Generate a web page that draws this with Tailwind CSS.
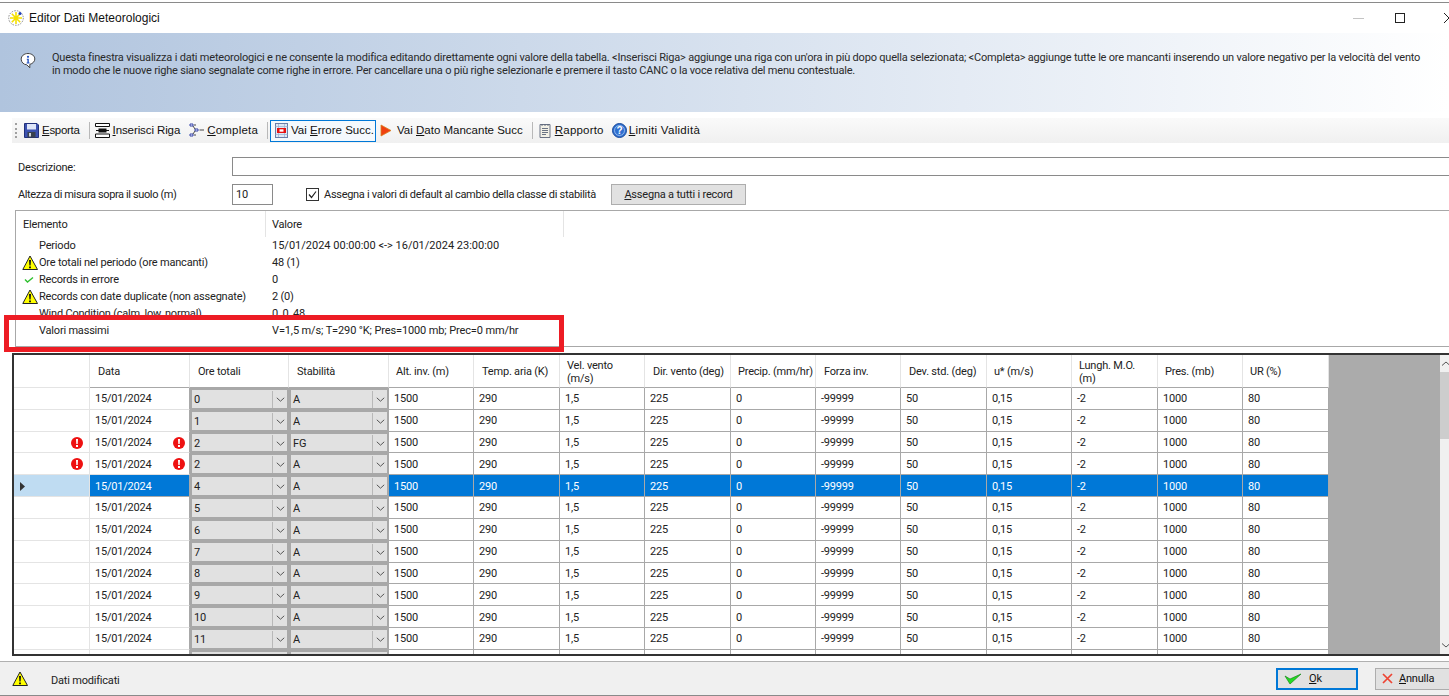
<!DOCTYPE html>
<html lang="it">
<head>
<meta charset="utf-8">
<title>Editor Dati Meteorologici</title>
<script src="https://cdn.jsdelivr.net/npm/@tailwindcss/browser@4"></script>
</head>
<body class="bg-white">
<svg class="absolute w-0 h-0" aria-hidden="true">
  <symbol id="warn" viewBox="0 0 16 16"><path d="M8 1 15.500 14.500H.8Z" fill="#ffff00" stroke="#222" stroke-width="1"/><path d="M7 5h2l-.4 5.500H7.400Z M7.100 11.500h1.800v1.800H7.100Z" fill="#111"/></symbol>
  <symbol id="err" viewBox="0 0 12 12"><circle cx="6" cy="6" r="6" fill="#ee1111"/><path d="M5 2h2l-.3 5H5.300Z M5 8h2v2H5Z" fill="#fff"/></symbol>
  <symbol id="chev" viewBox="0 0 9 5"><path d="M.8.8 4.500 4.200 8.200.8" fill="none" stroke="#555" stroke-width="1"/></symbol>
</svg>
<div class="relative w-[1449px] h-[696px] overflow-hidden flex flex-col font-['Roboto',sans-serif] text-[11px] leading-[13px] tracking-[-0.2px] text-[#222]">

  <!-- title bar -->
  <div class="h-[3px] border-b border-[#8a8a8a] shrink-0"></div>
  <div class="h-[30px] shrink-0 flex items-center pl-[8px]">
    <svg class="w-[16px] h-[16px]" viewBox="0 0 16 16"><circle cx="8" cy="8" r="7.300" fill="none" stroke="#888" stroke-width="1" stroke-dasharray="1.500 1.200"/><path d="M8 2v12M2 8h12M3.800 3.800l8.400 8.400M12.200 3.800l-8.400 8.400" stroke="#f4e000" stroke-width="1.600"/><circle cx="12" cy="3.500" r="1.500" fill="#2040c0"/></svg>
    <span class="ml-[5px] font-['Liberation_Sans',sans-serif] text-[12px] tracking-normal text-[#111]">Editor Dati Meteorologici</span>
    <div class="ml-auto flex items-center mr-[-5px]">
      <span class="w-[11px] h-px bg-[#c4c4c4] mr-[31px]"></span>
      <span class="w-[10px] h-[10px] border border-[#222] mr-[39px]"></span>
      <svg class="w-[10px] h-[10px]" viewBox="0 0 10 10"><path d="M0 0 10 10M10 0 0 10" stroke="#222" stroke-width="1"/></svg>
    </div>
  </div>

  <!-- banner -->
  <div class="h-[79px] shrink-0 bg-gradient-to-r from-[#b0c4de] to-white flex items-start pt-[18px] pl-[20px]">
    <svg class="w-[16px] h-[17px] mt-[1px] shrink-0" viewBox="0 0 16 17"><path d="M8 1.500C4 1.500 1.200 4 1.200 7.200c0 3 2.400 5.400 5.600 5.600l3 3v-3.400c3-.8 5-3 5-5.400C14.800 4 12 1.500 8 1.500Z" fill="#fff" stroke="#444" stroke-width="1"/><circle cx="8" cy="4.800" r="1.100" fill="#2050c0"/><path d="M6.800 6.800h2v3.600h.8v1H6.600v-1h.8V7.800h-.6Z" fill="#2050c0"/></svg>
    <p class="ml-[16px] whitespace-nowrap text-[#2a2a2a]">Questa finestra visualizza i dati meteorologici e ne consente la modifica editando direttamente ogni valore della tabella. &lt;Inserisci Riga&gt; aggiunge una riga con un'ora in più dopo quella selezionata; &lt;Completa&gt; aggiunge tutte le ore mancanti inserendo un valore negativo per la velocità del vento<br>in modo che le nuove righe siano segnalate come righe in errore. Per cancellare una o più righe selezionarle e premere il tasto CANC o la voce relativa del menu contestuale.</p>
  </div>

  <!-- toolbar -->
  <div class="mt-[6px] ml-[12px] h-[25px] shrink-0 bg-gradient-to-b from-[#fafafa] to-[#f0f0f0] flex items-center font-['Liberation_Sans',sans-serif] text-[11.5px] tracking-normal text-[#111] whitespace-nowrap">
    <span class="ml-[3px] w-[2px] h-[15px] border-l-2 border-dotted border-[#a0a0a0]"></span>
    <svg class="ml-[7px] w-[15px] h-[15px]" viewBox="0 0 15 15"><path d="M.5.500h12.500l1.500 1.500v12.500H.5Z" fill="#3c52b0" stroke="#22307a"/><rect x="3" y="1" width="9" height="5.500" fill="#dfe6f8"/><rect x="3.500" y="9" width="8" height="5.500" fill="#39414f"/><rect x="5" y="10" width="2" height="3.500" fill="#cfd4dc"/></svg>
    <span class="ml-[3px] tracking-[-0.3px]"><u>E</u>sporta</span>
    <span class="ml-[9px] w-px h-[17px] bg-[#b8b8b8]"></span>
    <svg class="ml-[5px] w-[15px] h-[15px]" viewBox="0 0 15 15"><path d="M.5.500h14v3H.5Z M.5 11h14v3.500H.5Z" fill="#fff" stroke="#111"/><path d="M1 7.500h13" stroke="#111" stroke-width="1"/><rect x="3.500" y="5.500" width="8" height="4" fill="#111"/></svg>
    <span class="ml-[3px] tracking-[-0.1px]"><u>I</u>nserisci Riga</span>
    <svg class="ml-[9px] w-[15px] h-[15px]" viewBox="0 0 15 15"><path d="M1 1h3v2H1Z M6 6h3v2H6Z M1 11h3v2H1Z" fill="#fff" stroke="#2030a0" stroke-width=".9"/><path d="M5 2h2M10.500 7H15M5 12h2M4 3l2 3M4 11l2-3" stroke="#333" stroke-width=".9"/></svg>
    <span class="ml-[3px] tracking-[0.2px]"><u>C</u>ompleta</span>
    <span class="ml-[9px] w-px h-[17px] bg-[#b8b8b8]"></span>
    <div class="ml-[2px] w-[106px] h-[22px] shrink-0 border border-[#0078d7] bg-[#f4f9fd] flex items-center pl-[4px]">
      <svg class="w-[13px] h-[15px] shrink-0" viewBox="0 0 13 15"><rect x=".5" y=".5" width="12" height="14" fill="#dfe8f6" stroke="#6a7ea8"/><path d="M.5 3.500h12M.5 11.500h12M3.500 1v13M9.500 1v13" stroke="#9ab0d0" stroke-width=".7"/><rect x="2" y="5" width="9" height="5" fill="#e81010"/><rect x="4.500" y="6.300" width="4" height="2.400" fill="#fff"/></svg>
      <span class="ml-[3px]">Vai <u>E</u>rrore Succ.</span>
    </div>
    <svg class="ml-[4px] w-[12px] h-[13px]" viewBox="0 0 12 13"><path d="M1 1 11 6.500 1 12Z" fill="#f04010" stroke="#d88020" stroke-width=".8"/></svg>
    <span class="ml-[5px]">Vai <u>D</u>ato Mancante Succ</span>
    <span class="ml-[9px] w-px h-[17px] bg-[#b8b8b8]"></span>
    <svg class="ml-[5px] w-[14px] h-[15px]" viewBox="0 0 14 15"><path d="M2 1.500h10v13H2Z" fill="#f2f0e6" stroke="#6a7284"/><path d="M4 1v2M7 1v2M10 1v2M4 5.500h6M4 7.500h6M4 9.500h6M4 11.500h4" stroke="#5a6478" stroke-width=".9"/></svg>
    <span class="ml-[3px] tracking-[0.2px]"><u>R</u>apporto</span>
    <svg class="ml-[8px] w-[15px] h-[15px]" viewBox="0 0 15 15"><circle cx="7.500" cy="7.500" r="7" fill="#2f6fd0" stroke="#1a4a9a"/><circle cx="7.500" cy="7.500" r="5" fill="none" stroke="#a8c8f0" stroke-width=".8"/><text x="7.500" y="11" text-anchor="middle" font-size="10" font-weight="700" fill="#fff" font-family="Liberation Sans">?</text></svg>
    <span class="ml-[2px] tracking-[0.3px]"><u>L</u>imiti Validità</span>
  </div>

  <!-- description -->
  <div class="mt-[14px] h-[19px] shrink-0 flex">
    <span class="ml-[18px] w-[214px] pt-[4px]">Descrizione:</span>
    <div class="flex-1 border-t border-l border-b border-[#8a8a8a] bg-white"></div>
  </div>

  <!-- altezza -->
  <div class="mt-[8px] h-[21px] shrink-0 flex items-center">
    <span class="ml-[18px] w-[214px] tracking-[-0.38px]">Altezza di misura sopra il suolo (m)</span>
    <div class="w-[41px] h-[21px] border border-[#8a8a8a] pl-[3px] flex items-center">10</div>
    <span class="ml-[33px] w-[13px] h-[13px] border border-[#333] flex items-center justify-center">
      <svg class="w-[9px] h-[9px]" viewBox="0 0 9 9"><path d="M1 4.500 3.500 7.500 8 1.500" fill="none" stroke="#222" stroke-width="1.200"/></svg>
    </span>
    <span class="ml-[5px] tracking-[-0.29px]">Assegna i valori di default al cambio della classe di stabilità</span>
    <button class="ml-[15px] w-[135px] h-[21px] border border-[#adadad] bg-[#e1e1e1] text-[#222]"><u>A</u>ssegna a tutti i record</button>
  </div>

  <!-- info list -->
  <div class="mt-[5px] ml-[15px] h-[137px] shrink-0 border-t border-l border-b border-[#a8a8a8] bg-white overflow-hidden">
    <div class="h-[26px] flex items-center">
      <span class="w-[250px] pl-[7px] h-full flex items-center border-r border-[#e4e4e4]">Elemento</span>
      <span class="w-[298px] pl-[6px] h-full flex items-center border-r border-[#e4e4e4]">Valore</span>
    </div>
    <div class="[&>div]:h-[17px] [&>div]:flex [&>div]:items-center">
      <div><span class="w-[256px] pl-[23px]">Periodo</span><span class="tracking-normal">15/01/2024 00:00:00 &lt;-&gt; 16/01/2024 23:00:00</span></div>
      <div><span class="w-[256px] flex items-center pl-[6px]"><svg class="w-[16px] h-[16px] mr-[1px]"><use href="#warn"/></svg>Ore totali nel periodo (ore mancanti)</span><span>48 (1)</span></div>
      <div><span class="w-[256px] flex items-center pl-[8px]"><svg class="w-[10px] h-[8px] mr-[5px]" viewBox="0 0 10 8"><path d="M1 3.500 3.500 6 9 1.500" fill="none" stroke="#30c030" stroke-width="1.400"/></svg>Records in errore</span><span>0</span></div>
      <div><span class="w-[256px] flex items-center pl-[6px]"><svg class="w-[16px] h-[16px] mr-[1px]"><use href="#warn"/></svg>Records con date duplicate (non assegnate)</span><span>2 (0)</span></div>
      <div><span class="w-[256px] pl-[23px]">Wind Condition (calm, low, normal)</span><span>0, 0, 48</span></div>
      <div><span class="w-[256px] pl-[23px]">Valori massimi</span><span class="tracking-[-0.12px]">V=1,5 m/s; T=290 °K; Pres=1000 mb; Prec=0 mm/hr</span></div>
    </div>
  </div>

  <!-- data grid -->
  <div class="mt-[6px] ml-[12px] h-[303px] shrink-0 border-t-2 border-b-2 border-l-2 border-[#333] flex overflow-hidden">
    <div class="w-[1315px] shrink-0 grid grid-cols-[76px_100px_99px_100px_85px_86px_85px_86px_85px_85px_86px_85px_86px_85px_86px] grid-rows-[33px] auto-rows-[21.82px] [&>div]:flex [&>div]:items-center [&>div]:pl-[5px] [&>div]:pt-[1px] [&>div]:border-r [&>div]:border-b [&>div]:border-[#a8a8a8] [&>div]:overflow-hidden [&>div]:whitespace-nowrap">
      <div class="border-[#e4e4e4]!"></div>
      <div class="pl-[8px]! border-r-[#e4e4e4]!">Data</div>
      <div class="pl-[8px]! border-r-[#e4e4e4]!">Ore totali</div>
      <div class="pl-[8px]! border-r-[#e4e4e4]!">Stabilità</div>
      <div class="pl-[7px]! border-r-[#e4e4e4]!">Alt. inv. (m)</div>
      <div class="pl-[8px]! border-r-[#e4e4e4]!">Temp. aria (K)</div>
      <div class="pl-[7px]! border-r-[#e4e4e4]!">Vel. vento<br>(m/s)</div>
      <div class="pl-[8px]! border-r-[#e4e4e4]!">Dir. vento (deg)</div>
      <div class="pl-[7px]! border-r-[#e4e4e4]!">Precip. (mm/hr)</div>
      <div class="pl-[8px]! border-r-[#e4e4e4]!">Forza inv.</div>
      <div class="pl-[8px]! border-r-[#e4e4e4]!">Dev. std. (deg)</div>
      <div class="pl-[7px]! border-r-[#e4e4e4]!">u* (m/s)</div>
      <div class="pl-[7px]! border-r-[#e4e4e4]!">Lungh. M.O.<br>(m)</div>
      <div class="pl-[7px]! border-r-[#e4e4e4]!">Pres. (mb)</div>
      <div class="pl-[7px]! border-r-[#e4e4e4]!">UR (%)</div>

      <!-- row 0 -->
      <div class="border-[#e4e4e4]!"></div><div class="border-b-[#e0e0e0]!">15/01/2024</div>
      <div class="bg-[#e1e1e1] border-2! border-[#a8a8a8]! pl-[2px]! justify-between"><span>0</span><span class="w-[15px] h-full border-l border-[#b8b8b8] flex items-center justify-center"><svg class="w-[9px] h-[5px]"><use href="#chev"/></svg></span></div>
      <div class="bg-[#e1e1e1] border-2! border-[#a8a8a8]! pl-[2px]! justify-between"><span>A</span><span class="w-[15px] h-full border-l border-[#b8b8b8] flex items-center justify-center"><svg class="w-[9px] h-[5px]"><use href="#chev"/></svg></span></div>
      <div>1500</div><div>290</div><div>1,5</div><div>225</div><div>0</div><div>-99999</div><div>50</div><div>0,15</div><div>-2</div><div>1000</div><div>80</div>

      <!-- row 1 -->
      <div class="border-[#e4e4e4]!"></div><div class="border-b-[#e0e0e0]!">15/01/2024</div>
      <div class="bg-[#e1e1e1] border-2! border-[#a8a8a8]! pl-[2px]! justify-between"><span>1</span><span class="w-[15px] h-full border-l border-[#b8b8b8] flex items-center justify-center"><svg class="w-[9px] h-[5px]"><use href="#chev"/></svg></span></div>
      <div class="bg-[#e1e1e1] border-2! border-[#a8a8a8]! pl-[2px]! justify-between"><span>A</span><span class="w-[15px] h-full border-l border-[#b8b8b8] flex items-center justify-center"><svg class="w-[9px] h-[5px]"><use href="#chev"/></svg></span></div>
      <div>1500</div><div>290</div><div>1,5</div><div>225</div><div>0</div><div>-99999</div><div>50</div><div>0,15</div><div>-2</div><div>1000</div><div>80</div>

      <!-- row 2 -->
      <div class="border-[#e4e4e4]! justify-end pr-[6px]"><svg class="w-[12px] h-[12px]"><use href="#err"/></svg></div><div class="border-b-[#e0e0e0]! justify-between pr-[4px]"><span>15/01/2024</span><svg class="w-[12px] h-[12px]"><use href="#err"/></svg></div>
      <div class="bg-[#e1e1e1] border-2! border-[#a8a8a8]! pl-[2px]! justify-between"><span>2</span><span class="w-[15px] h-full border-l border-[#b8b8b8] flex items-center justify-center"><svg class="w-[9px] h-[5px]"><use href="#chev"/></svg></span></div>
      <div class="bg-[#e1e1e1] border-2! border-[#a8a8a8]! pl-[2px]! justify-between"><span>FG</span><span class="w-[15px] h-full border-l border-[#b8b8b8] flex items-center justify-center"><svg class="w-[9px] h-[5px]"><use href="#chev"/></svg></span></div>
      <div>1500</div><div>290</div><div>1,5</div><div>225</div><div>0</div><div>-99999</div><div>50</div><div>0,15</div><div>-2</div><div>1000</div><div>80</div>

      <!-- row 3 -->
      <div class="border-[#e4e4e4]! justify-end pr-[6px]"><svg class="w-[12px] h-[12px]"><use href="#err"/></svg></div><div class="border-b-[#e0e0e0]! justify-between pr-[4px]"><span>15/01/2024</span><svg class="w-[12px] h-[12px]"><use href="#err"/></svg></div>
      <div class="bg-[#e1e1e1] border-2! border-[#a8a8a8]! pl-[2px]! justify-between"><span>2</span><span class="w-[15px] h-full border-l border-[#b8b8b8] flex items-center justify-center"><svg class="w-[9px] h-[5px]"><use href="#chev"/></svg></span></div>
      <div class="bg-[#e1e1e1] border-2! border-[#a8a8a8]! pl-[2px]! justify-between"><span>A</span><span class="w-[15px] h-full border-l border-[#b8b8b8] flex items-center justify-center"><svg class="w-[9px] h-[5px]"><use href="#chev"/></svg></span></div>
      <div>1500</div><div>290</div><div>1,5</div><div>225</div><div>0</div><div>-99999</div><div>50</div><div>0,15</div><div>-2</div><div>1000</div><div>80</div>

      <!-- row 4: selected -->
      <div class="bg-[#bfdcf2] border-[#e4e4e4]!"><svg class="ml-[1px] w-[5px] h-[9px]" viewBox="0 0 5 9"><path d="M0 0 5 4.500 0 9Z" fill="#333"/></svg></div><div class="bg-[#0078d7] text-white">15/01/2024</div>
      <div class="bg-[#e1e1e1] border-2! border-[#a8a8a8]! pl-[2px]! justify-between"><span>4</span><span class="w-[15px] h-full border-l border-[#b8b8b8] flex items-center justify-center"><svg class="w-[9px] h-[5px]"><use href="#chev"/></svg></span></div>
      <div class="bg-[#e1e1e1] border-2! border-[#a8a8a8]! pl-[2px]! justify-between"><span>A</span><span class="w-[15px] h-full border-l border-[#b8b8b8] flex items-center justify-center"><svg class="w-[9px] h-[5px]"><use href="#chev"/></svg></span></div>
      <div class="bg-[#0078d7] text-white">1500</div><div class="bg-[#0078d7] text-white">290</div><div class="bg-[#0078d7] text-white">1,5</div><div class="bg-[#0078d7] text-white">225</div><div class="bg-[#0078d7] text-white">0</div><div class="bg-[#0078d7] text-white">-99999</div><div class="bg-[#0078d7] text-white">50</div><div class="bg-[#0078d7] text-white">0,15</div><div class="bg-[#0078d7] text-white">-2</div><div class="bg-[#0078d7] text-white">1000</div><div class="bg-[#0078d7] text-white">80</div>

      <!-- row 5 -->
      <div class="border-[#e4e4e4]!"></div><div class="border-b-[#e0e0e0]!">15/01/2024</div>
      <div class="bg-[#e1e1e1] border-2! border-[#a8a8a8]! pl-[2px]! justify-between"><span>5</span><span class="w-[15px] h-full border-l border-[#b8b8b8] flex items-center justify-center"><svg class="w-[9px] h-[5px]"><use href="#chev"/></svg></span></div>
      <div class="bg-[#e1e1e1] border-2! border-[#a8a8a8]! pl-[2px]! justify-between"><span>A</span><span class="w-[15px] h-full border-l border-[#b8b8b8] flex items-center justify-center"><svg class="w-[9px] h-[5px]"><use href="#chev"/></svg></span></div>
      <div>1500</div><div>290</div><div>1,5</div><div>225</div><div>0</div><div>-99999</div><div>50</div><div>0,15</div><div>-2</div><div>1000</div><div>80</div>

      <!-- row 6 -->
      <div class="border-[#e4e4e4]!"></div><div class="border-b-[#e0e0e0]!">15/01/2024</div>
      <div class="bg-[#e1e1e1] border-2! border-[#a8a8a8]! pl-[2px]! justify-between"><span>6</span><span class="w-[15px] h-full border-l border-[#b8b8b8] flex items-center justify-center"><svg class="w-[9px] h-[5px]"><use href="#chev"/></svg></span></div>
      <div class="bg-[#e1e1e1] border-2! border-[#a8a8a8]! pl-[2px]! justify-between"><span>A</span><span class="w-[15px] h-full border-l border-[#b8b8b8] flex items-center justify-center"><svg class="w-[9px] h-[5px]"><use href="#chev"/></svg></span></div>
      <div>1500</div><div>290</div><div>1,5</div><div>225</div><div>0</div><div>-99999</div><div>50</div><div>0,15</div><div>-2</div><div>1000</div><div>80</div>

      <!-- row 7 -->
      <div class="border-[#e4e4e4]!"></div><div class="border-b-[#e0e0e0]!">15/01/2024</div>
      <div class="bg-[#e1e1e1] border-2! border-[#a8a8a8]! pl-[2px]! justify-between"><span>7</span><span class="w-[15px] h-full border-l border-[#b8b8b8] flex items-center justify-center"><svg class="w-[9px] h-[5px]"><use href="#chev"/></svg></span></div>
      <div class="bg-[#e1e1e1] border-2! border-[#a8a8a8]! pl-[2px]! justify-between"><span>A</span><span class="w-[15px] h-full border-l border-[#b8b8b8] flex items-center justify-center"><svg class="w-[9px] h-[5px]"><use href="#chev"/></svg></span></div>
      <div>1500</div><div>290</div><div>1,5</div><div>225</div><div>0</div><div>-99999</div><div>50</div><div>0,15</div><div>-2</div><div>1000</div><div>80</div>

      <!-- row 8 -->
      <div class="border-[#e4e4e4]!"></div><div class="border-b-[#e0e0e0]!">15/01/2024</div>
      <div class="bg-[#e1e1e1] border-2! border-[#a8a8a8]! pl-[2px]! justify-between"><span>8</span><span class="w-[15px] h-full border-l border-[#b8b8b8] flex items-center justify-center"><svg class="w-[9px] h-[5px]"><use href="#chev"/></svg></span></div>
      <div class="bg-[#e1e1e1] border-2! border-[#a8a8a8]! pl-[2px]! justify-between"><span>A</span><span class="w-[15px] h-full border-l border-[#b8b8b8] flex items-center justify-center"><svg class="w-[9px] h-[5px]"><use href="#chev"/></svg></span></div>
      <div>1500</div><div>290</div><div>1,5</div><div>225</div><div>0</div><div>-99999</div><div>50</div><div>0,15</div><div>-2</div><div>1000</div><div>80</div>

      <!-- row 9 -->
      <div class="border-[#e4e4e4]!"></div><div class="border-b-[#e0e0e0]!">15/01/2024</div>
      <div class="bg-[#e1e1e1] border-2! border-[#a8a8a8]! pl-[2px]! justify-between"><span>9</span><span class="w-[15px] h-full border-l border-[#b8b8b8] flex items-center justify-center"><svg class="w-[9px] h-[5px]"><use href="#chev"/></svg></span></div>
      <div class="bg-[#e1e1e1] border-2! border-[#a8a8a8]! pl-[2px]! justify-between"><span>A</span><span class="w-[15px] h-full border-l border-[#b8b8b8] flex items-center justify-center"><svg class="w-[9px] h-[5px]"><use href="#chev"/></svg></span></div>
      <div>1500</div><div>290</div><div>1,5</div><div>225</div><div>0</div><div>-99999</div><div>50</div><div>0,15</div><div>-2</div><div>1000</div><div>80</div>

      <!-- row 10 -->
      <div class="border-[#e4e4e4]!"></div><div class="border-b-[#e0e0e0]!">15/01/2024</div>
      <div class="bg-[#e1e1e1] border-2! border-[#a8a8a8]! pl-[2px]! justify-between"><span>10</span><span class="w-[15px] h-full border-l border-[#b8b8b8] flex items-center justify-center"><svg class="w-[9px] h-[5px]"><use href="#chev"/></svg></span></div>
      <div class="bg-[#e1e1e1] border-2! border-[#a8a8a8]! pl-[2px]! justify-between"><span>A</span><span class="w-[15px] h-full border-l border-[#b8b8b8] flex items-center justify-center"><svg class="w-[9px] h-[5px]"><use href="#chev"/></svg></span></div>
      <div>1500</div><div>290</div><div>1,5</div><div>225</div><div>0</div><div>-99999</div><div>50</div><div>0,15</div><div>-2</div><div>1000</div><div>80</div>

      <!-- row 11 -->
      <div class="border-[#e4e4e4]!"></div><div class="border-b-[#e0e0e0]!">15/01/2024</div>
      <div class="bg-[#e1e1e1] border-2! border-[#a8a8a8]! pl-[2px]! justify-between"><span>11</span><span class="w-[15px] h-full border-l border-[#b8b8b8] flex items-center justify-center"><svg class="w-[9px] h-[5px]"><use href="#chev"/></svg></span></div>
      <div class="bg-[#e1e1e1] border-2! border-[#a8a8a8]! pl-[2px]! justify-between"><span>A</span><span class="w-[15px] h-full border-l border-[#b8b8b8] flex items-center justify-center"><svg class="w-[9px] h-[5px]"><use href="#chev"/></svg></span></div>
      <div>1500</div><div>290</div><div>1,5</div><div>225</div><div>0</div><div>-99999</div><div>50</div><div>0,15</div><div>-2</div><div>1000</div><div>80</div>

      <!-- row 12: clipped by the grid's lower edge -->
      <div class="border-[#e4e4e4]!"></div><div class="border-b-[#e0e0e0]!"></div>
      <div class="bg-[#e1e1e1] border-2! border-[#a8a8a8]!"></div>
      <div class="bg-[#e1e1e1] border-2! border-[#a8a8a8]!"></div>
      <div></div><div></div><div></div><div></div><div></div><div></div><div></div><div></div><div></div><div></div><div></div>
    </div>
    <div class="flex-1 bg-[#ababab]"></div>
    <div class="w-[9px] shrink-0 bg-[#f0f0f0] flex flex-col">
      <svg class="w-[9px] h-[17px] shrink-0" viewBox="0 0 9 17"><path d="M2 10.500 6 7l4 3.500" fill="none" stroke="#555" stroke-width="1"/></svg>
      <div class="h-[67px] bg-[#cdcdcd]"></div>
      <svg class="w-[9px] h-[17px] shrink-0 mt-auto" viewBox="0 0 9 17"><path d="M2 6.500 6 10l4-3.500" fill="none" stroke="#555" stroke-width="1"/></svg>
    </div>
  </div>

  <!-- footer -->
  <div class="mt-[5px] flex-1 border-t border-b border-t-[#b0b0b0] border-b-[#8a8a8a] bg-[#f0f0f0] flex items-center text-[#222]">
    <svg class="ml-[12px] w-[16px] h-[16px]"><use href="#warn"/></svg>
    <span class="ml-[23px] pt-[3px]">Dati modificati</span>
    <button class="ml-auto w-[82px] h-[22px] border-2 border-[#0078d7] bg-[#e1e1e1] flex items-center pl-[6px] text-[#111]">
      <svg class="w-[18px] h-[13px]" viewBox="0 0 18 13"><path d="M1 4 6 12 17 2 6 7Z" fill="#22dd22" stroke="#188818" stroke-width=".7"/></svg>
      <span class="ml-[7px]"><u>O</u>k</span>
    </button>
    <button class="ml-[17px] mr-[-5px] w-[79px] h-[22px] border border-[#adadad] bg-[#e1e1e1] flex items-center pl-[6px] text-[#111]">
      <svg class="w-[11px] h-[11px]" viewBox="0 0 11 11"><path d="M1 1 10 10M10 1 1 10" stroke="#ee4433" stroke-width="1.700"/></svg>
      <span class="ml-[6px]"><u>A</u>nnulla</span>
    </button>
  </div>

  <!-- red annotation drawn over the screenshot -->
  <div class="absolute left-[4px] top-[315px] w-[560px] h-[37px] border-[5px] border-[#ed1c24] pointer-events-none"></div>
</div>
</body>
</html>
